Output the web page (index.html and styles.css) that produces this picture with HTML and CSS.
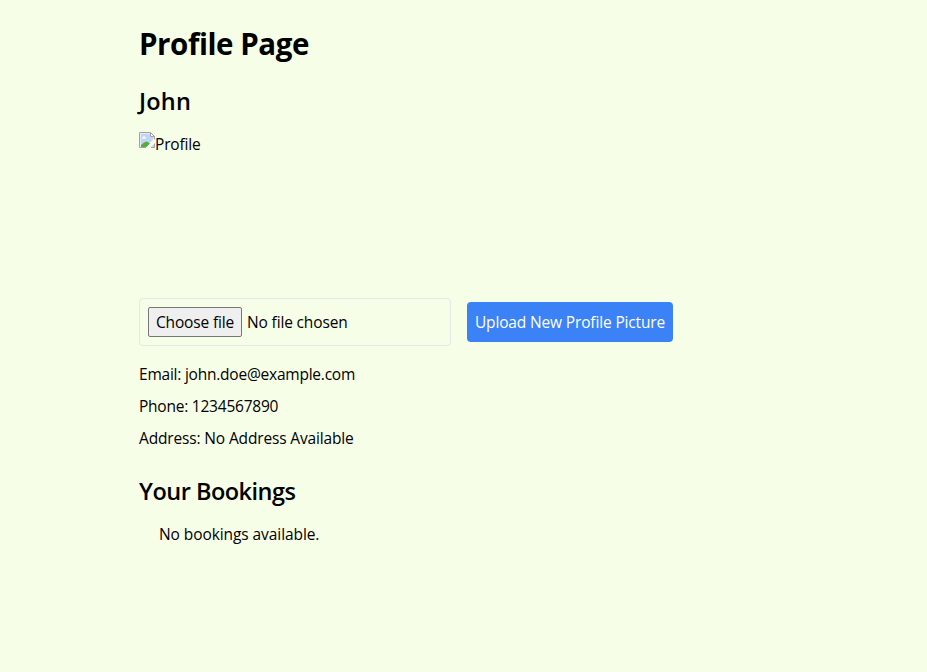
FILE: index.html
```html
<!DOCTYPE html>
<html lang="en">
<head>
<meta charset="utf-8">
<title>Profile Page</title>
<link rel="stylesheet" href="styles.css">
</head>
<body>
<main class="container">
  <h1 class="title">Profile Page</h1>
  <h2 class="name">John</h2>
  <div class="avatar">
    <svg class="avatar-icon" width="16" height="16" viewBox="0 0 16 16" aria-hidden="true">
      <path d="M.5.5h11l4 4v3L7.500 15.500h-7z" fill="#fff"/>
      <path d="M1.500 1.500h9.500v3.500h3.500v2.500L7 14.500H1.500z" fill="#c3d5f5"/>
      <path d="M3 6.500V5.500h1v-1h2v1h1v1z" fill="#fff"/>
      <path d="M2 15v-2Q5 9.500 8 9.500l3 2L7.500 15z" fill="#55ae3b"/>
      <path d="M.5 15.500V.5h11l4 4v3M11.500.5v4h4M.5 15.500h6.500M12 15.500h3.500v-4" fill="none" stroke="#a0a2a5"/>
      <path d="M15 12v3h-3z" fill="#c3d5f5"/>
      <path d="M16 8v2.500l-5.500 5.500H8z" fill="#fff"/>
    </svg>
    <span class="avatar-alt">Profile</span>
  </div>
  <form class="upload">
    <div class="file-field">
      <button type="button" class="choose">Choose file</button>
      <span class="file-status">No file chosen</span>
    </div>
    <button type="button" class="submit">Upload New Profile Picture</button>
  </form>
  <p class="detail email">Email: john.doe@example.com</p>
  <p class="detail phone">Phone: 1234567890</p>
  <p class="detail address">Address: No Address Available</p>
  <h2 class="bookings-title">Your Bookings</h2>
  <p class="empty">No bookings available.</p>
</main>
</body>
</html>
```
FILE: styles.css
```css
* { box-sizing: border-box; margin: 0; padding: 0; }
body {
  background: #f7fee7;
  color: #000;
  font: 15.5px/24px "Segoe UI", "Open Sans", "Noto Sans", sans-serif;
  letter-spacing: -0.15px;
  min-height: 100vh;
}
.container { width: 649px; margin: 0 auto; padding-top: 26px; }
button { font: inherit; color: inherit; letter-spacing: inherit; white-space: nowrap; }
.title { font-size: 29.5px; line-height: 36px; font-weight: 700; letter-spacing: -0.43px; margin-bottom: 23px; }
h2 { font-size: 23.5px; line-height: 32px; font-weight: 560; }
.name { margin-bottom: 15px; letter-spacing: 0.2px; }
.avatar { display: flex; align-items: flex-start; height: 150px; margin-bottom: 16px; }
.avatar-icon { display: block; flex: none; }
.upload { display: flex; align-items: center; gap: 16px; margin-bottom: 16px; }
.file-field {
  display: flex; align-items: center; gap: 5px;
  width: 312px; height: 48px; padding: 8px;
  border: 1px solid #e5e7eb; border-radius: 4px;
  white-space: nowrap;
}
.choose {
  width: 94px; height: 30px;
  border: 1px solid #767676; border-radius: 2px; background: #efefef;
}
.submit {
  width: 206px; height: 40px; border: 0; border-radius: 4px;
  background: #3b82f6; color: #fff;
}
.detail { margin-bottom: 8px; }
.email, .phone { letter-spacing: -0.23px; }
.bookings-title { margin: 25px 0 15px; letter-spacing: -0.5px; }
.empty { padding-left: 20px; letter-spacing: -0.08px; }
```
